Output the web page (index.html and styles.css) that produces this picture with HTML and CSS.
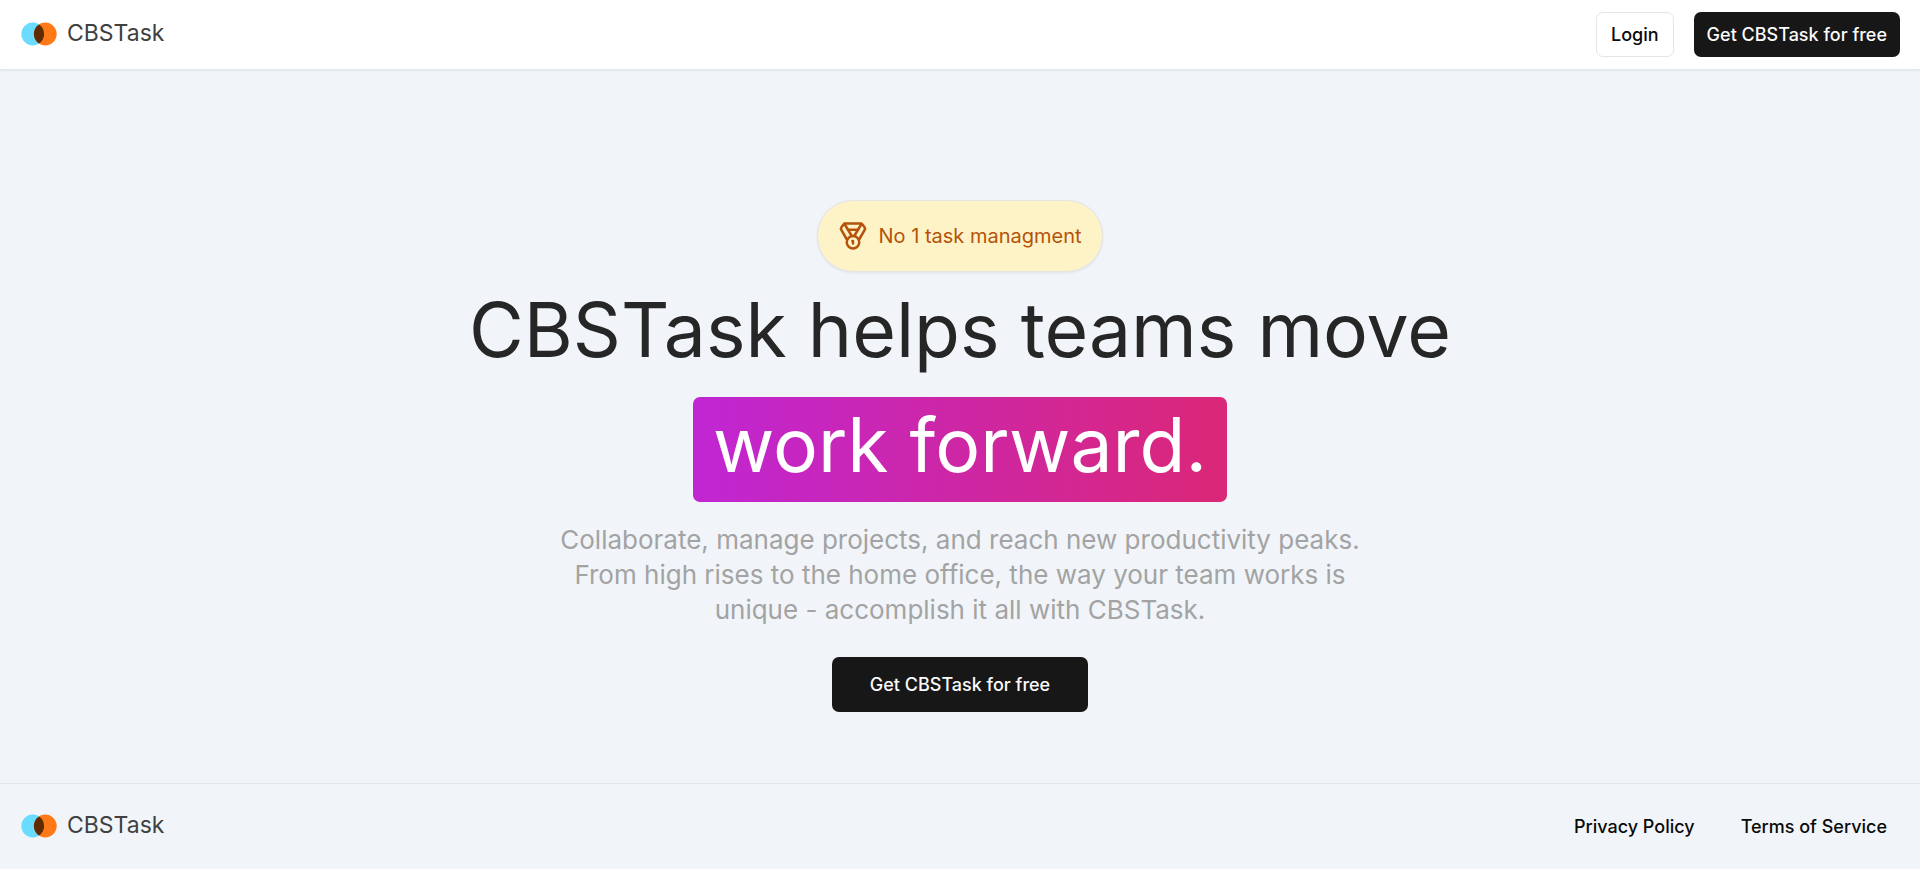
FILE: index.html
```
<!DOCTYPE html>
<html lang="en">
<head>
<meta charset="utf-8">
<meta name="viewport" content="width=device-width, initial-scale=1">
<title>CBSTask</title>
<link rel="stylesheet" href="styles.css">
</head>
<body class="page">
<header class="navbar">
  <a class="logo" href="#">
    <svg class="logo-mark" viewBox="0 0 36 24" aria-hidden="true">
      <circle cx="11.7" cy="12" r="11.4" fill="#6adcff"/>
      <circle cx="24.3" cy="12" r="11.4" fill="#ff7a17"/>
      <path d="M18 2.5a11.4 11.4 0 0 1 0 19a11.4 11.4 0 0 1 0-19z" fill="#5f2b06"/>
    </svg>
    <span class="logo-text">CBSTask</span>
  </a>
  <div class="actions">
    <button class="button button-outline" type="button">Login</button>
    <button class="button button-primary" type="button">Get CBSTask for free</button>
  </div>
</header>
<main class="hero">
  <div class="badge">
    <svg class="badge-icon" viewBox="0 0 24 24" fill="none" stroke="currentColor" stroke-width="2" stroke-linecap="round" stroke-linejoin="round" aria-hidden="true">
      <path d="M7.21 15 2.66 7.14a2 2 0 0 1 .13-2.2L4.4 2.8A2 2 0 0 1 6 2h12a2 2 0 0 1 1.6.8l1.6 2.14a2 2 0 0 1 .14 2.2L16.79 15"/>
      <path d="M11 12 5.12 2.2"/>
      <path d="m13 12 5.88-9.8"/>
      <path d="M8 7h8"/>
      <circle cx="12" cy="17" r="5"/>
      <path d="M12 18v-2h-.5"/>
    </svg>
    No 1 task managment
  </div>
  <h1 class="title">CBSTask helps teams move</h1>
  <div class="highlight">work forward.</div>
  <p class="lead">Collaborate, manage projects, and reach new productivity peaks.<br>From high rises to the home office, the way your team works is<br>unique - accomplish it all with CBSTask.</p>
  <button class="button button-primary button-large" type="button">Get CBSTask for free</button>
</main>
<footer class="footer">
  <a class="logo" href="#">
    <svg class="logo-mark" viewBox="0 0 36 24" aria-hidden="true">
      <circle cx="11.7" cy="12" r="11.4" fill="#6adcff"/>
      <circle cx="24.3" cy="12" r="11.4" fill="#ff7a17"/>
      <path d="M18 2.5a11.4 11.4 0 0 1 0 19a11.4 11.4 0 0 1 0-19z" fill="#5f2b06"/>
    </svg>
    <span class="logo-text">CBSTask</span>
  </a>
  <nav class="actions">
    <a class="button" href="#">Privacy Policy</a>
    <a class="button" href="#">Terms of Service</a>
  </nav>
</footer>
</body>
</html>
```
FILE: styles.css
```
* {
  box-sizing: border-box;
}

.page {
  margin: 0;
  min-height: 100vh;
  display: flex;
  flex-direction: column;
  background: #f1f5f9;
  color: #0a0a0a;
  font-family: Inter, "Liberation Sans", sans-serif;
}

.navbar,
.footer {
  display: flex;
  align-items: center;
  justify-content: space-between;
  padding: 12px 20px;
}

.navbar {
  background: #ffffff;
  border-bottom: 1px solid #e5e7eb;
  box-shadow: 0 1px 3px rgba(0, 0, 0, 0.06);
}

.footer {
  padding: 20px;
  border-top: 1px solid #e2e5e9;
}

.logo {
  display: flex;
  align-items: center;
  gap: 9px;
  padding-bottom: 1px;
  color: #404040;
  text-decoration: none;
}

.logo-mark {
  width: 38px;
  height: 24px;
}

.logo-text {
  font-size: 23px;
  line-height: 28px;
  padding-bottom: 3px;
}

.actions {
  display: flex;
  align-items: center;
  gap: 20px;
}

.button {
  display: inline-flex;
  align-items: center;
  justify-content: center;
  height: 45px;
  padding: 0 13px;
  border: 0;
  border-radius: 7px;
  background: transparent;
  color: #0a0a0a;
  font-family: inherit;
  font-size: 18px;
  font-weight: 500;
  text-decoration: none;
}

.button-outline {
  padding: 0 14px;
  border: 1px solid #e5e5e5;
  background: #ffffff;
}

.button-primary {
  background: #171717;
  color: #fafafa;
}

.button-large {
  height: 55px;
  padding: 0 38px;
}

.hero {
  flex: 1;
  display: flex;
  flex-direction: column;
  align-items: center;
  justify-content: center;
  padding: 58px 20px 0;
  text-align: center;
}

.badge {
  display: flex;
  align-items: center;
  gap: 10px;
  margin-bottom: 20px;
  padding: 20px;
  border: 1px solid #e5e5e5;
  border-radius: 36px;
  background: #fef3c7;
  box-shadow: 0 1px 3px rgba(0, 0, 0, 0.08);
  color: #b45309;
  font-size: 20px;
  line-height: 30px;
}

.badge-icon {
  width: 30px;
  height: 30px;
}

.title {
  margin: 0 0 30px;
  color: #262626;
  font-size: 75px;
  font-weight: 400;
  line-height: 75px;
}

.highlight {
  padding: 10px 20px 20px;
  border-radius: 7px;
  background: linear-gradient(to right, #c026d3, #db2777);
  color: #ffffff;
  font-size: 75px;
  line-height: 75px;
}

.lead {
  margin: 20px 0 30px;
  color: #a3a3a3;
  font-size: 26px;
  line-height: 35px;
}
```
